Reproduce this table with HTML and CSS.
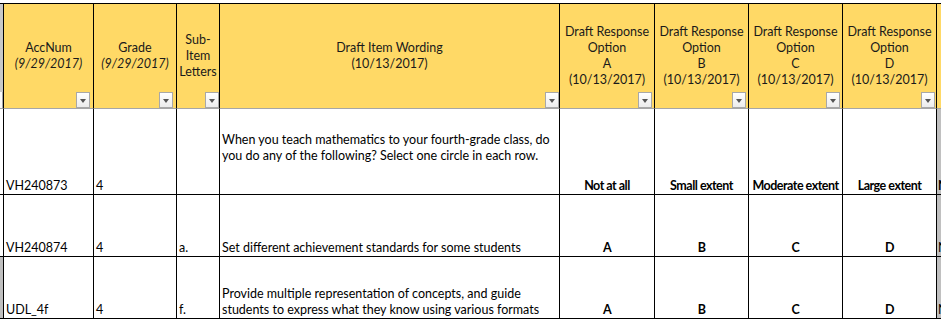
FILE: index.html
```html
<!DOCTYPE html>
<html>
<head>
<meta charset="utf-8">
<link rel="stylesheet" href="styles.css">
</head>
<body>
<div class="top"></div>
<div class="sheet">
  <div class="cell stub stub-head"><span class="stub-btn"></span></div>
  <div class="cell head"><span>AccNum<br><i>(9/29/2017)</i></span><span class="filter f-3"></span></div>
  <div class="cell head"><span>Grade<br><i>(9/29/2017)</i></span><span class="filter f-3"></span></div>
  <div class="cell head"><span>Sub-<br>Item<br>Letters</span><span class="filter f-0"></span></div>
  <div class="cell head"><span>Draft Item Wording<br>(10/13/2017)</span><span class="filter f-0"></span></div>
  <div class="cell head"><span>Draft Response<br>Option<br>A<br>(10/13/2017)</span><span class="filter f-2"></span></div>
  <div class="cell head"><span>Draft Response<br>Option<br>B<br>(10/13/2017)</span><span class="filter f-2"></span></div>
  <div class="cell head"><span>Draft Response<br>Option<br>C<br>(10/13/2017)</span><span class="filter f-2"></span></div>
  <div class="cell head"><span>Draft Response<br>Option<br>D<br>(10/13/2017)</span><span class="filter f-1"></span></div>
  <div class="cell head tail"></div>

  <div class="cell stub"></div>
  <div class="cell txt">VH240873</div>
  <div class="cell txt">4</div>
  <div class="cell txt"></div>
  <div class="cell txt pad-2">When you teach mathematics to your fourth-grade class, do<br>you do any of the following? Select one circle in each row.</div>
  <div class="cell mid">Not at all</div>
  <div class="cell mid">Small extent</div>
  <div class="cell mid">Moderate extent</div>
  <div class="cell mid">Large extent</div>
  <div class="cell txt tail-body bold">N</div>

  <div class="cell stub"></div>
  <div class="cell txt">VH240874</div>
  <div class="cell txt">4</div>
  <div class="cell txt">a.</div>
  <div class="cell txt">Set different achievement standards for some students</div>
  <div class="cell mid">A</div>
  <div class="cell mid">B</div>
  <div class="cell mid">C</div>
  <div class="cell mid">D</div>
  <div class="cell txt tail-body">N</div>

  <div class="cell stub stub-sel"></div>
  <div class="cell txt">UDL_4f</div>
  <div class="cell txt">4</div>
  <div class="cell txt">f.</div>
  <div class="cell txt">Provide multiple representation of concepts, and guide<br>students to express what they know using various formats</div>
  <div class="cell mid">A</div>
  <div class="cell mid">B</div>
  <div class="cell mid">C</div>
  <div class="cell mid">D</div>
  <div class="cell txt tail-body">N</div>
</div>
</body>
</html>
```
FILE: styles.css
```css
html, body {
  margin: 0;
  padding: 0;
  background: #ffffff;
}

body {
  font-family: Lato, "Open Sans", sans-serif;
  font-size: 12.5px;
  line-height: 16px;
  color: #000;
  width: 941px;
  height: 320px;
  overflow: hidden;
}

.top {
  height: 4px;
  box-sizing: border-box;
  border-bottom: 1px solid #000;
  background: #fff;
}

.sheet {
  display: grid;
  grid-template-columns: 4px 90px 83px 43px 340px 95px 94px 94px 94px 1fr;
  grid-template-rows: 105px 86px 62px 62px;
}

.cell {
  box-sizing: border-box;
  border-right: 1px solid #000;
  border-bottom: 1px solid #000;
  min-width: 0;
  overflow: hidden;
  white-space: nowrap;
}

.head {
  position: relative;
  background: #ffd966;
  border-bottom-color: #a6a6a6;
  display: flex;
  align-items: center;
  justify-content: center;
  text-align: center;
  color: #1a1a1a;
}

.head i {
  font-style: italic;
}

.tail {
  border-right: none;
}

.filter {
  position: absolute;
  bottom: 0;
  width: 14px;
  height: 16px;
  box-sizing: border-box;
  border: 1px solid #a8a8a8;
  background: linear-gradient(#ffffff, #ececec);
}

.filter::after {
  content: "";
  position: absolute;
  left: 3px;
  top: 6px;
  border-left: 3.5px solid transparent;
  border-right: 3.5px solid transparent;
  border-top: 4px solid #555;
}

.f-0 { right: 0; }
.f-1 { right: 1px; }
.f-2 { right: 2px; }
.f-3 { right: 3px; }

.stub {
  background: #fff;
}

.stub-head {
  position: relative;
  background: #c8c8c8;
  border-bottom-color: #a6a6a6;
}

.stub-btn {
  position: absolute;
  left: 0;
  bottom: 0;
  width: 3px;
  height: 16px;
  box-sizing: border-box;
  border-right: 1px solid #a8a8a8;
  background: #fafafa;
}

.stub-sel {
  background: #bfbfbf;
}

.txt {
  display: flex;
  align-items: flex-end;
  padding-left: 2px;
}

.pad-2 {
  padding-bottom: 30px;
}

.mid {
  display: flex;
  align-items: flex-end;
  justify-content: center;
  font-weight: bold;
  letter-spacing: -0.5px;
}

.tail-body {
  border-right: none;
  background: #c0c0c0;
  padding-left: 1px;
}

.bold {
  font-weight: bold;
}
```
